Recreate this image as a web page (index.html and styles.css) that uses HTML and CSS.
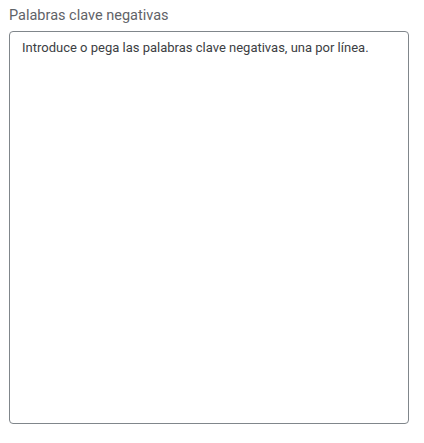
FILE: index.html
```html
<!DOCTYPE html>
<html lang="es">
<head>
<meta charset="utf-8">
<link rel="stylesheet" href="styles.css">
</head>
<body>
<div class="field">
  <label class="field-label" for="kw">Palabras clave negativas</label>
  <textarea id="kw" class="field-input" placeholder="Introduce o pega las palabras clave negativas, una por línea."></textarea>
</div>
</body>
</html>
```
FILE: styles.css
```css
html, body {
  margin: 0;
  padding: 0;
  background: #ffffff;
}
body {
  font-family: Roboto, "Liberation Sans", sans-serif;
}
.field {
  display: flex;
  flex-direction: column;
  gap: 7px;
  padding: 8px 15px 0 9px;
}
.field-label {
  font-size: 14.5px;
  line-height: 16px;
  color: #5f6368;
}
.field-input {
  box-sizing: border-box;
  width: 400px;
  height: 393px;
  margin: 0;
  padding: 8px 12px;
  border: 1px solid #80868b;
  border-radius: 4px;
  resize: none;
  font-family: Roboto, "Liberation Sans", sans-serif;
  font-size: 13px;
  line-height: 16px;
  color: #3c4043;
  outline: none;
}
.field-input::placeholder {
  color: #3c4043;
  opacity: 1;
}
```
